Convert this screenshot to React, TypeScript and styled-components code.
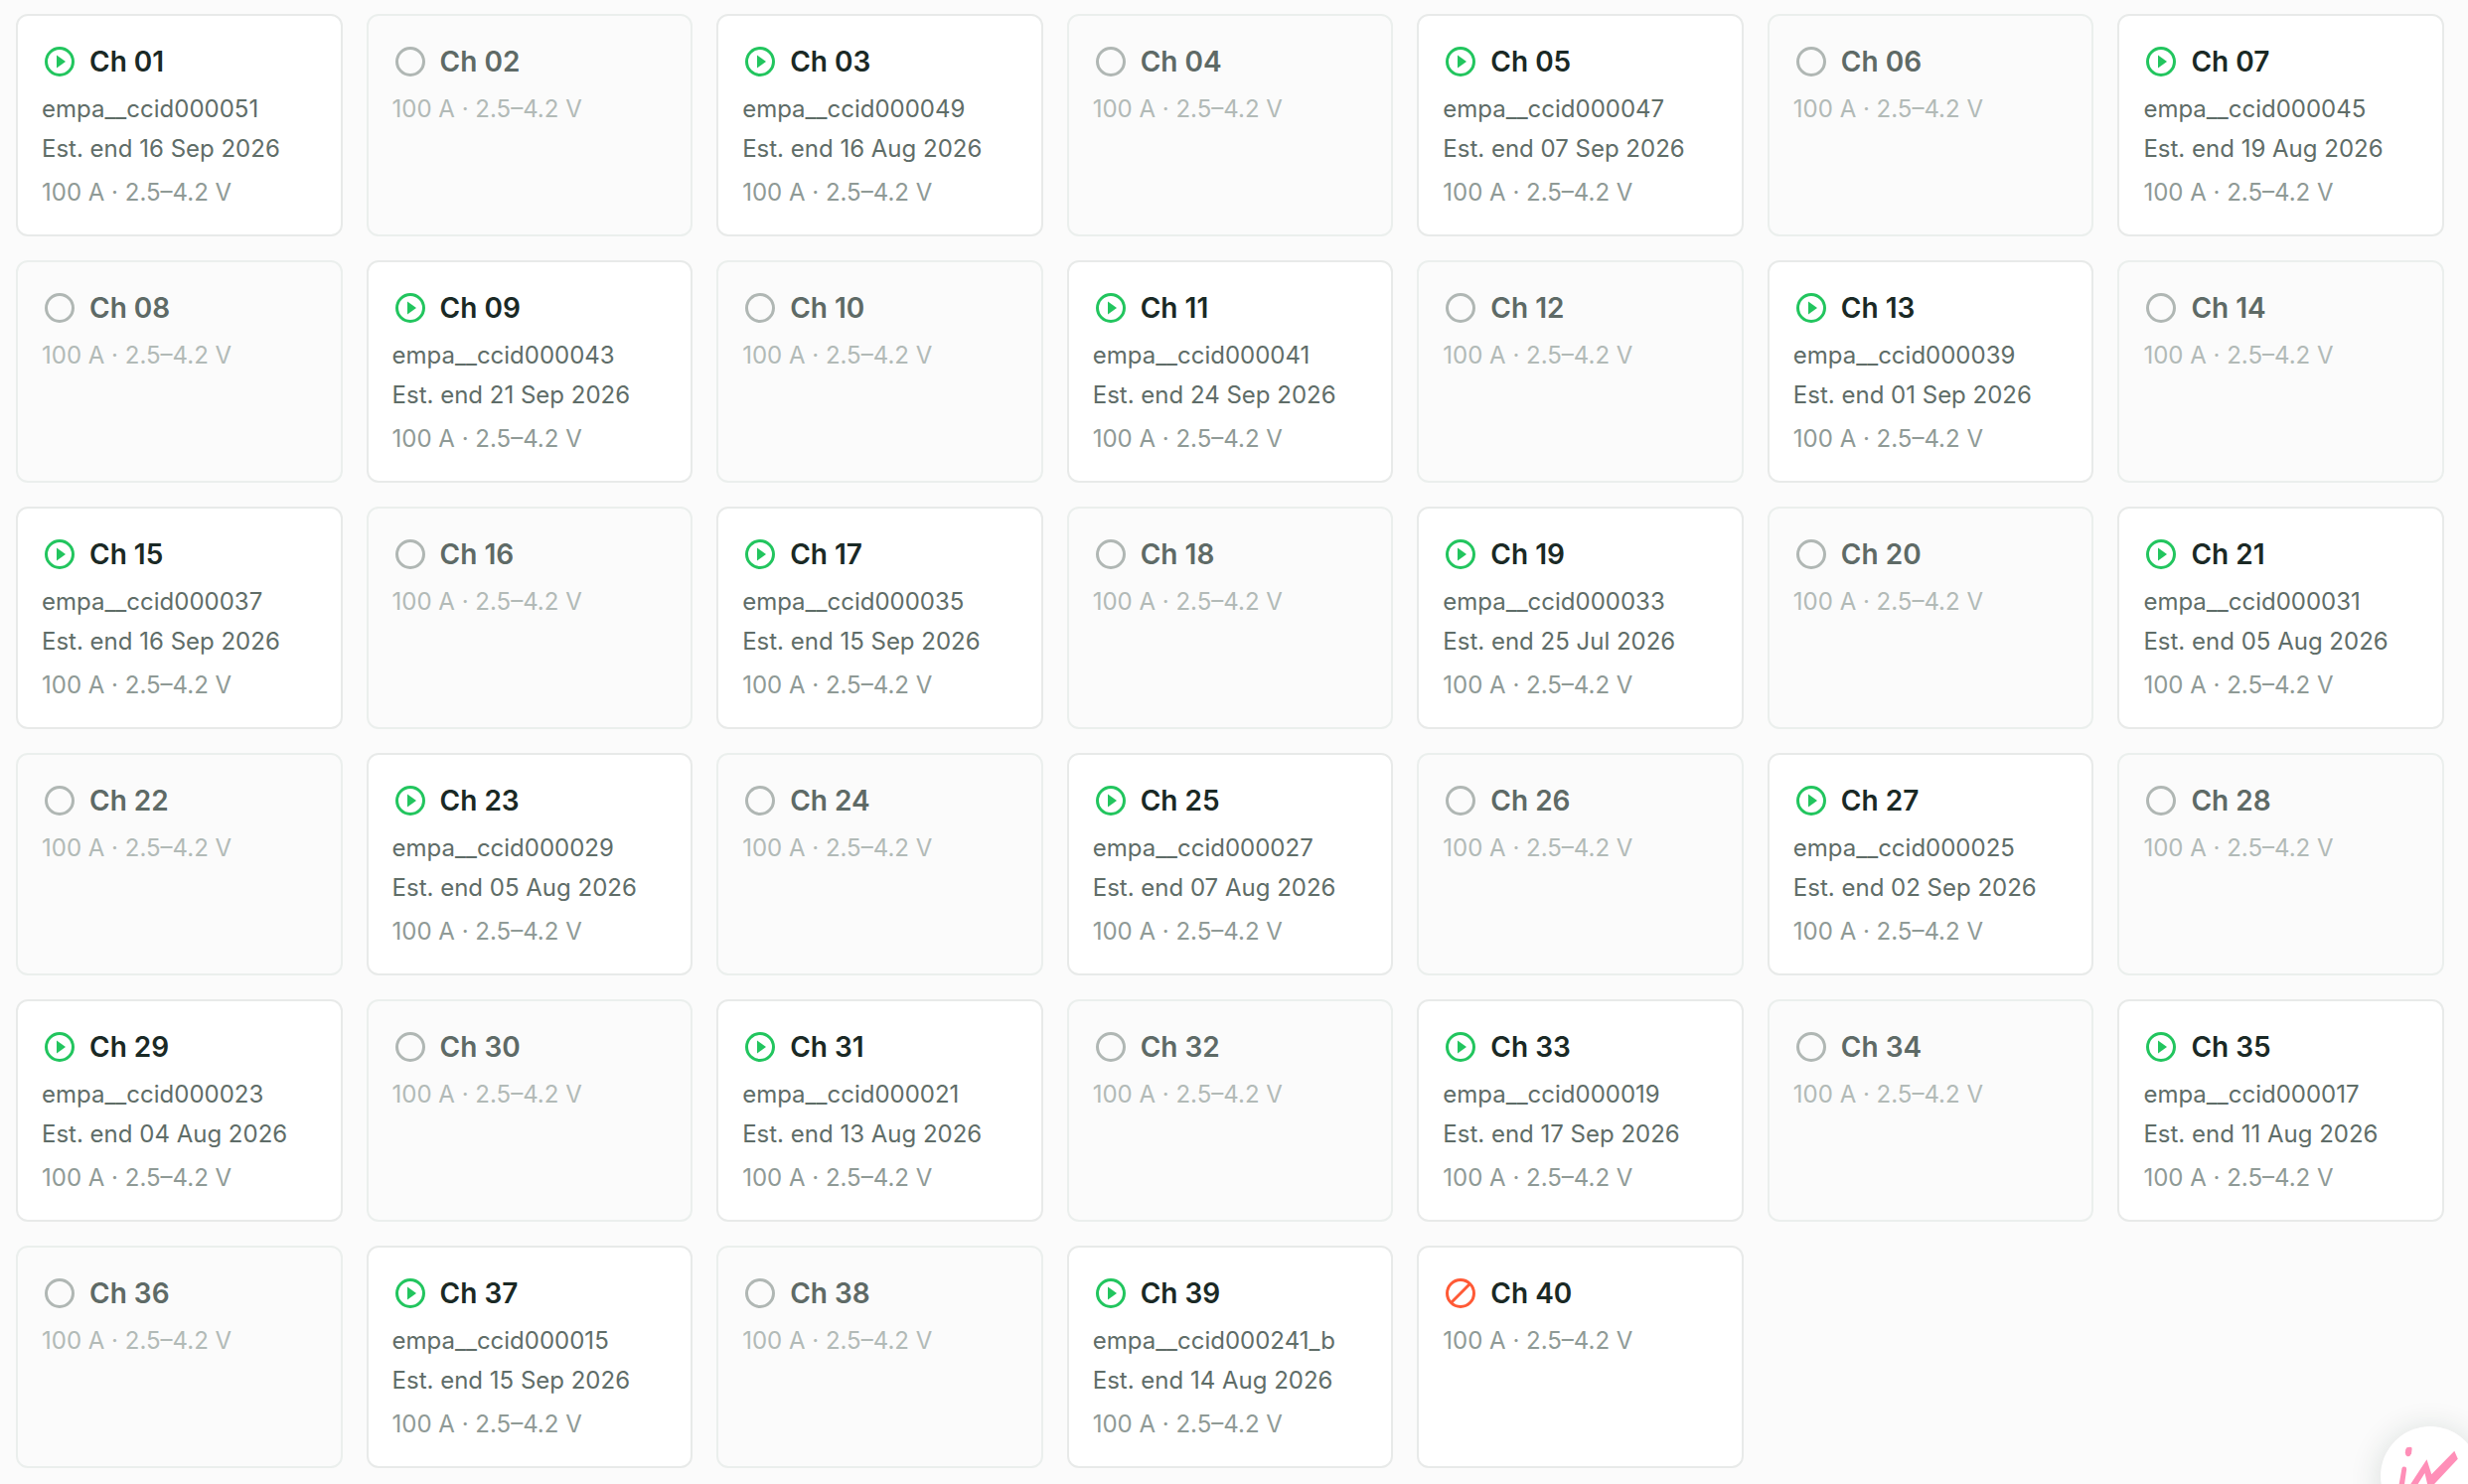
import React from "react";
import styled, { createGlobalStyle } from "styled-components";

const GlobalStyle = createGlobalStyle`
  * { box-sizing: border-box; }
  body {
    margin: 0;
    background: #fbfbfb;
    font-family: Inter, "Liberation Sans", sans-serif;
  }
`;

type Status = "running" | "idle" | "blocked";

interface Channel {
  status: Status;
  cell?: string;
  end?: string;
}

const running = (cell: string, end: string): Channel => ({
  status: "running",
  cell: `empa__ccid${cell}`,
  end,
});
const idle: Channel = { status: "idle" };

const channels: Channel[] = [
  running("000051", "16 Sep 2026"), idle,
  running("000049", "16 Aug 2026"), idle,
  running("000047", "07 Sep 2026"), idle,
  running("000045", "19 Aug 2026"), idle,
  running("000043", "21 Sep 2026"), idle,
  running("000041", "24 Sep 2026"), idle,
  running("000039", "01 Sep 2026"), idle,
  running("000037", "16 Sep 2026"), idle,
  running("000035", "15 Sep 2026"), idle,
  running("000033", "25 Jul 2026"), idle,
  running("000031", "05 Aug 2026"), idle,
  running("000029", "05 Aug 2026"), idle,
  running("000027", "07 Aug 2026"), idle,
  running("000025", "02 Sep 2026"), idle,
  running("000023", "04 Aug 2026"), idle,
  running("000021", "13 Aug 2026"), idle,
  running("000019", "17 Sep 2026"), idle,
  running("000017", "11 Aug 2026"), idle,
  running("000015", "15 Sep 2026"), idle,
  running("000241_b", "14 Aug 2026"),
  { status: "blocked" },
];

const Grid = styled.main`
  display: grid;
  grid-template-columns: repeat(7, minmax(0, 1fr));
  gap: 24px;
  padding: 14px 24px 14px 16px;
`;

const Card = styled.article<{ $idle: boolean }>`
  display: flex;
  flex-direction: column;
  gap: 4px;
  min-height: 224px;
  padding: 24px;
  border: 2px solid ${(p) => (p.$idle ? "#ebefed" : "#e8eae9")};
  border-radius: 12px;
  background: ${(p) => (p.$idle ? "#fbfbfb" : "#ffffff")};
`;

const Header = styled.header`
  display: flex;
  align-items: center;
  gap: 12px;
  margin-bottom: 4px;
`;

const Title = styled.h2<{ $idle: boolean }>`
  margin: 0;
  font-size: 28px;
  font-weight: 600;
  line-height: 44px;
  color: ${(p) => (p.$idle ? "#5e6a66" : "#1a2925")};
`;

const Line = styled.p`
  margin: 0;
  font-size: 24px;
  line-height: 36px;
  white-space: nowrap;
  color: #5f6d68;
`;

const Limits = styled(Line)<{ $idle: boolean; $spaced: boolean }>`
  margin-top: ${(p) => (p.$spaced ? "4px" : "0")};
  color: ${(p) => (p.$idle ? "#b2bab7" : "#8f9a96")};
`;

const Icon = styled.svg`
  flex: none;
  width: 36px;
  height: 36px;
`;

const Launcher = styled.button`
  position: fixed;
  right: -12px;
  bottom: -42px;
  width: 100px;
  height: 100px;
  padding: 0;
  border: 0;
  border-radius: 50%;
  background: #ffffff;
  box-shadow: 0 4px 32px rgba(20, 50, 40, 0.16);
`;

const Mark = styled.svg`
  display: block;
  width: 100px;
  height: 100px;
`;

const colors: Record<Status, string> = {
  running: "#22c55e",
  idle: "#b0b7b4",
  blocked: "#ff5a36",
};

function StatusIcon({ status }: { status: Status }) {
  return (
    <Icon viewBox="0 0 24 24" fill="none" role="img" aria-label={status}>
      <circle cx="12" cy="12" r="9" stroke={colors[status]} strokeWidth="2" />
      {status === "running" && <path d="M10 7.7v8.6l6-4.3z" fill={colors[status]} />}
      {status === "blocked" && (
        <path d="M5.7 18.3 18.3 5.7" stroke={colors[status]} strokeWidth="2" />
      )}
    </Icon>
  );
}

function ChannelCard({ index, channel }: { index: number; channel: Channel }) {
  const isIdle = channel.status === "idle";
  return (
    <Card $idle={isIdle}>
      <Header>
        <StatusIcon status={channel.status} />
        <Title $idle={isIdle}>Ch {String(index).padStart(2, "0")}</Title>
      </Header>
      {channel.cell && <Line>{channel.cell}</Line>}
      {channel.end && <Line>Est. end {channel.end}</Line>}
      <Limits $idle={isIdle} $spaced={Boolean(channel.end)}>
        100 A · 2.5–4.2 V
      </Limits>
    </Card>
  );
}

export default function App() {
  return (
    <>
      <GlobalStyle />
      <Grid>
        {channels.map((channel, i) => (
          <ChannelCard key={i} index={i + 1} channel={channel} />
        ))}
      </Grid>
      <Launcher type="button" aria-label="Open assistant">
        <Mark viewBox="0 0 100 100" fill="#ff8fb8">
          <path d="M26.5 21.2 30 20.8Q31.8 20.8 31.6 23L31 27.5Q29.8 30.5 27 30.3 25 29.5 24.8 26.5 24.8 22.5 26.5 21.2Z" />
          <path d="M21.5 42Q22 40.6 24 40.6 26.4 40.8 26.2 43L23.8 60 22 73H16.5L18.7 58Z" />
          <path d="M28 61.5 46.5 33.3 51.3 48.3 74.3 24.7 77.8 32.8 48.5 64 44.5 47 33 65.5Z" />
        </Mark>
      </Launcher>
    </>
  );
}
